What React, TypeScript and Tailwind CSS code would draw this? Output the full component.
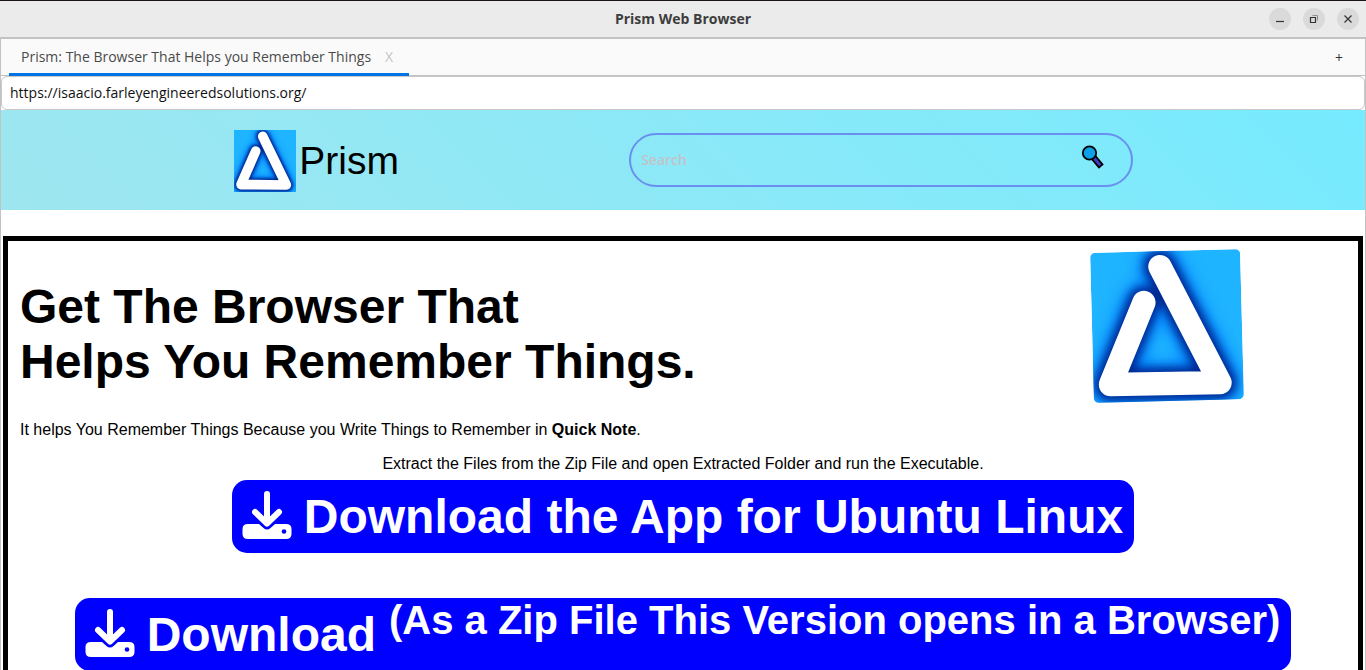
import { useId } from "react";
import type { ReactNode } from "react";

function PrismLogo({ className }: { className?: string }) {
  const id = useId();
  const mark = "M69.5 15.5 L126.5 133 L17 132 L52.5 51";

  return (
    <svg viewBox="0 0 150 150" className={className} role="img" aria-label="Prism logo">
      <defs>
        <filter id={`${id}-wide`} x="-30%" y="-30%" width="160%" height="160%">
          <feGaussianBlur stdDeviation="8" />
        </filter>
        <filter id={`${id}-tight`} x="-30%" y="-30%" width="160%" height="160%">
          <feGaussianBlur stdDeviation="4" />
        </filter>
      </defs>
      <rect width="150" height="150" fill="#1eb4ff" />
      <g fill="none" strokeLinecap="round" strokeLinejoin="round">
        <path d={mark} stroke="#0080ff" strokeWidth="42" filter={`url(#${id}-wide)`} />
        <path d={mark} stroke="#002c94" strokeWidth="33" filter={`url(#${id}-tight)`} />
        <path d={mark} stroke="#ffffff" strokeWidth="23.4" />
      </g>
    </svg>
  );
}

function DownloadIcon() {
  return (
    <svg viewBox="0 0 48 48" className="-mt-1 size-12 shrink-0 overflow-visible" aria-hidden="true">
      <path
        d="M5 33 H16 L20.5 37 Q24 40 27.5 37 L32 33 H43 Q48.5 33 48.5 38 V43 Q48.5 48 43 48 H5 Q-0.5 48 -0.5 43 V38 Q-0.5 33 5 33 Z"
        fill="#fff"
      />
      <path
        d="M24 3 V33 M12 21 L24 32.5 L36 21"
        fill="none"
        stroke="#0000ff"
        strokeWidth="9"
        strokeLinejoin="round"
      />
      <path
        d="M24 3 V32 M12 21 L24 32.5 L36 21"
        fill="none"
        stroke="#fff"
        strokeWidth="6"
        strokeLinecap="round"
        strokeLinejoin="round"
      />
      <circle cx="41" cy="40.5" r="2.3" fill="#0000ff" />
    </svg>
  );
}

function SearchIcon() {
  return (
    <svg viewBox="0 0 24 24" className="size-6" aria-hidden="true">
      <path d="M10.5 13.5 L14 10.5 L21.5 19.5 L18 22.5 Z" fill="#3d3dc4" stroke="#000" strokeWidth="1.8" />
      <circle cx="8.5" cy="8" r="6.7" fill="#0ba0e8" stroke="#000" strokeWidth="1.8" />
    </svg>
  );
}

const windowButtons = [
  { label: "Minimize", path: "M7 13.5 H15", faint: "" },
  { label: "Restore", path: "M7.5 9.5 H12.5 V14.5 H7.5 Z", faint: "M9.5 7.5 H14.5 V12.5" },
  { label: "Close", path: "M7.5 7.5 L14.5 14.5 M14.5 7.5 L7.5 14.5", faint: "" },
];

function TitleBar() {
  return (
    <div className="grid h-[39px] shrink-0 grid-cols-[1fr_auto_1fr] items-center border-t border-b-2 border-t-[#1b141b] border-b-[#c2c2c2] bg-[#ebebeb] px-[7px]">
      <span />
      <h1 className="text-sm font-bold text-[#3d3d3d]">Prism Web Browser</h1>
      <div className="flex justify-end gap-3">
        {windowButtons.map((button) => (
          <button
            key={button.label}
            type="button"
            aria-label={button.label}
            className="size-[22px] rounded-full bg-[#dadada]"
          >
            <svg viewBox="0 0 22 22" className="size-full" fill="none">
              <path d={button.faint} stroke="#8f8f8f" />
              <path d={button.path} stroke="#333" strokeWidth="1.2" />
            </svg>
          </button>
        ))}
      </div>
    </div>
  );
}

function TabBar() {
  return (
    <div className="flex h-[37px] shrink-0 items-stretch justify-between border-b border-[#c2c2c2] bg-[#fafafa] pl-2">
      <div className="-mb-px flex w-[400px] items-center gap-3.5 border-b-[3px] border-[#0073e5] pt-0.5 pl-3 text-sm text-[#4a4a4a]">
        <span>Prism: The Browser That Helps you Remember Things</span>
        <button type="button" aria-label="Close tab" className="text-[#c4c4c4]">
          X
        </button>
      </div>
      <button type="button" aria-label="New tab" className="px-[22px] pt-0.5 text-sm text-[#333]">
        +
      </button>
    </div>
  );
}

function SiteHeader() {
  return (
    <header className="flex h-[100px] shrink-0 items-center justify-between bg-linear-45 from-[#9ee6ef] to-[#76ebff] pr-[17%] pl-[17.1%]">
      <a href="#" className="flex items-center gap-[3px] pt-0.5 text-[39px] text-black">
        <PrismLogo className="size-[62px]" />
        <span>Prism</span>
      </a>
      <form className="flex h-[54px] w-[504px] items-center rounded-full border-2 border-[#6b8ff0] pr-[26px] pl-2.5">
        <input
          type="text"
          aria-label="Search"
          placeholder="Search"
          className="min-w-0 flex-1 bg-transparent font-['Open_Sans',sans-serif] text-sm font-semibold outline-none placeholder:text-[#c3c3c8]"
        />
        <button type="button" aria-label="Submit search" className="-mt-1.5">
          <SearchIcon />
        </button>
      </form>
    </header>
  );
}

function DownloadLink({ children }: { children: ReactNode }) {
  return (
    <a
      href="#"
      className="flex items-center gap-[13px] rounded-[15px] bg-[#0000ff] px-[11px] py-2.5 text-5xl leading-[53px] font-bold whitespace-nowrap text-white"
    >
      <DownloadIcon />
      {children}
    </a>
  );
}

export default function App() {
  return (
    <div className="flex h-screen flex-col overflow-hidden bg-white font-['Open_Sans',sans-serif]">
      <TitleBar />
      <div className="flex min-h-0 flex-1 flex-col border-x border-[#c2c2c2]">
        <TabBar />
        <input
          type="text"
          aria-label="Address"
          defaultValue="https://isaacio.farleyengineeredsolutions.org/"
          className="h-[34px] w-full shrink-0 rounded-md border border-[#c8c8c8] bg-white px-2 pb-0.5 text-sm text-[#111] outline-none"
        />
        <div className="min-h-0 flex-1 overflow-hidden font-['Liberation_Sans',Arial,sans-serif] text-black">
          <SiteHeader />
          <main className="mx-0.5 mt-[26px] border-[5px] border-black px-3 pt-2.5 pb-12">
            <div className="flex items-start justify-between">
              <div>
                <h2 className="mt-7 text-5xl leading-[55px] font-bold">
                  Get The Browser That
                  <br />
                  Helps You Remember Things.
                </h2>
                <p className="mt-[31px] text-base leading-5">
                  It helps You Remember Things Because you Write Things to Remember in <b>Quick Note</b>.
                </p>
              </div>
              <PrismLogo className="mr-[104px] size-[150px] -rotate-[1.5deg] rounded-[5px]" />
            </div>
            <p className="mt-3.5 text-center text-base leading-5">
              Extract the Files from the Zip File and open Extracted Folder and run the Executable.
            </p>
            <div className="mt-1.5 flex flex-col items-center gap-[45px]">
              <DownloadLink>Download the App for Ubuntu Linux</DownloadLink>
              <DownloadLink>
                <span>Download</span>
                <span className="-mt-7 text-[40px]">(As a Zip File This Version opens in a Browser)</span>
              </DownloadLink>
            </div>
          </main>
        </div>
      </div>
    </div>
  );
}
